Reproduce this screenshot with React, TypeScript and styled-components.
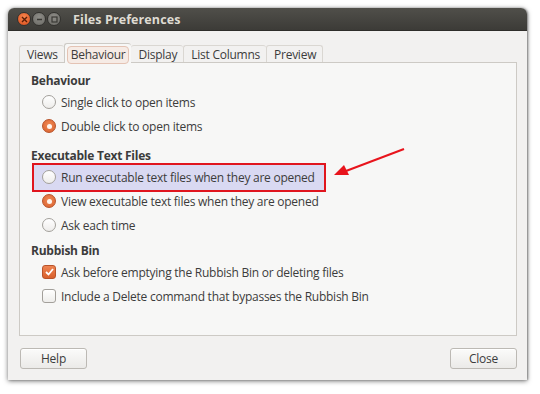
import React from 'react'
import styled, { createGlobalStyle, css } from 'styled-components'

const Global = createGlobalStyle`
  html, body {
    margin: 0;
    background: #ffffff;
  }
  body {
    font-family: "Open Sans", "Noto Sans", sans-serif;
    font-size: 12px;
    letter-spacing: -0.25px;
    color: #3c3c3c;
  }
`

const Page = styled.div`
  width: 540px;
  height: 394px;
  padding: 8px 0 0 8px;
  box-sizing: border-box;
`

const Window = styled.div`
  width: 519px;
  height: 372px;
  display: flex;
  flex-direction: column;
  border-radius: 6px 6px 0 0;
  overflow: hidden;
  box-shadow: 0 1px 5px rgba(0, 0, 0, 0.55), 1px 0 2px rgba(0, 0, 0, 0.3);
  background: #f2f1f0;
`

const TitleBar = styled.div`
  height: 23px;
  flex: none;
  display: flex;
  align-items: center;
  padding-left: 9px;
  gap: 1px;
  background: linear-gradient(#504f4a, #3c3b37);
  border-bottom: 1px solid #2e2d2a;
  box-sizing: border-box;
`

const WinButton = styled.span<{ $kind: 'close' | 'min' | 'max' }>`
  width: 14px;
  height: 14px;
  border-radius: 50%;
  display: inline-flex;
  align-items: center;
  justify-content: center;
  box-sizing: border-box;
  border: 1px solid #33322f;
  background: ${p => (p.$kind === 'close'
    ? 'radial-gradient(circle at 50% 35%, #f8874f, #d94d1b)'
    : 'radial-gradient(circle at 50% 35%, #8e8d88, #6b6a65)')};
  svg {
    display: block;
  }
`

const Title = styled.span`
  margin-left: 11px;
  font-weight: 700;
  font-size: 12.5px;
  color: #dfdbd2;
  letter-spacing: 0.1px;
`

const Body = styled.div`
  flex: 1;
  display: flex;
  flex-direction: column;
  padding: 12px 10px 11px 11px;
`

const Tabs = styled.div`
  display: flex;
  height: 19px;
  align-items: stretch;
`

const Tab = styled.div<{ $active?: boolean }>`
  padding: 0 6px 0 7px;
  display: flex;
  align-items: center;
  border: 1px solid #dad7d2;
  border-bottom: none;
  border-right: none;
  border-radius: 3px 3px 0 0;
  margin-top: 2px;
  &:last-child {
    border-right: 1px solid #dad7d2;
  }
  ${p => p.$active && css`
    margin-top: 0;
    padding: 2px 2px 0;
    background: #f7f7f6;
    border-color: #cdcac5;
    position: relative;
    z-index: 1;
    margin-bottom: -1px;
    & + div {
      border-left: none;
    }
    span {
      display: block;
      padding: 1px 3px;
      border: 1px solid #e4c3b4;
      border-radius: 4px;
      background: #f6ebe5;
      line-height: 14px;
    }
  `}
`

const Panel = styled.div`
  position: relative;
  height: 274px;
  box-sizing: border-box;
  border: 1px solid #cdcac5;
  background: #f7f7f6;
  padding: 9px 0 0 11px;
  display: flex;
  flex-direction: column;
`

const Section = styled.div<{ $gap: number }>`
  margin-top: ${p => p.$gap}px;
  display: flex;
  flex-direction: column;
`

const Heading = styled.div`
  height: 18px;
  line-height: 18px;
  font-weight: 700;
  color: #3c3c3c;
`

const Row = styled.div<{ $highlight?: boolean }>`
  position: relative;
  height: 24px;
  display: flex;
  align-items: center;
  gap: 5px;
  padding-left: 11px;
  ${p => p.$highlight && css`
    &::before {
      content: '';
      position: absolute;
      left: 1px;
      top: -2px;
      width: 290px;
      height: 25px;
      border: 2px solid #e0151e;
      background: #d9d9f2;
      z-index: 0;
    }
    & > * {
      position: relative;
      z-index: 1;
    }
  `}
`

const Radio = styled.span<{ $on?: boolean }>`
  width: 14px;
  height: 14px;
  border-radius: 50%;
  box-sizing: border-box;
  display: inline-flex;
  align-items: center;
  justify-content: center;
  flex: none;
  ${p => p.$on
    ? css`
      border: 1px solid #b8532a;
      background: radial-gradient(circle at 50% 40%, #f08a56, #d9602c);
      &::after {
        content: '';
        width: 5px;
        height: 5px;
        border-radius: 50%;
        background: #fff6ef;
      }
    `
    : css`
      border: 1px solid #a3a09b;
      background: linear-gradient(#ffffff, #eeedeb);
    `}
`

const Check = styled.span<{ $on?: boolean }>`
  width: 14px;
  height: 14px;
  border-radius: 3px;
  box-sizing: border-box;
  display: inline-flex;
  align-items: center;
  justify-content: center;
  flex: none;
  ${p => p.$on
    ? css`
      border: 1px solid #b8532a;
      background: linear-gradient(#ee8452, #d9602c);
    `
    : css`
      border: 1px solid #a3a09b;
      background: linear-gradient(#ffffff, #eeedeb);
    `}
`

const Label = styled.span`
  white-space: nowrap;
`

const Arrow = styled.svg`
  position: absolute;
  left: 300px;
  top: 82px;
  overflow: visible;
`

const Footer = styled.div`
  margin-top: 12px;
  display: flex;
  justify-content: space-between;
  padding-left: 1px;
`

const Button = styled.button`
  width: 67px;
  height: 21px;
  font-family: inherit;
  font-size: 12px;
  letter-spacing: inherit;
  color: #3c3c3c;
  border: 1px solid #bcb9b4;
  border-radius: 3px;
  background: linear-gradient(#fbfbfa, #ebeae8);
  box-shadow: inset 0 1px 0 #ffffff;
  padding: 0;
`

type Item = { kind: 'radio' | 'check'; on?: boolean; text: string; highlight?: boolean }

const sections: { title: string; gap: number; items: Item[] }[] = [
  {
    title: 'Behaviour',
    gap: 0,
    items: [
      { kind: 'radio', text: 'Single click to open items' },
      { kind: 'radio', on: true, text: 'Double click to open items' },
    ],
  },
  {
    title: 'Executable Text Files',
    gap: 9,
    items: [
      { kind: 'radio', text: 'Run executable text files when they are opened', highlight: true },
      { kind: 'radio', on: true, text: 'View executable text files when they are opened' },
      { kind: 'radio', text: 'Ask each time' },
    ],
  },
  {
    title: 'Rubbish Bin',
    gap: 5,
    items: [
      { kind: 'check', on: true, text: 'Ask before emptying the Rubbish Bin or deleting files' },
      { kind: 'check', text: 'Include a Delete command that bypasses the Rubbish Bin' },
    ],
  },
]

const tabs = ['Views', 'Behaviour', 'Display', 'List Columns', 'Preview']

export default function App() {
  return (
    <Page>
      <Global />
      <Window>
        <TitleBar>
          <WinButton $kind="close">
            <svg width="7" height="7" viewBox="0 0 7 7">
              <path d="M1 1 L6 6 M6 1 L1 6" stroke="#5a1e08" strokeWidth="1.4" />
            </svg>
          </WinButton>
          <WinButton $kind="min">
            <svg width="7" height="7" viewBox="0 0 7 7">
              <path d="M1 3.5 H6" stroke="#3a3935" strokeWidth="1.4" />
            </svg>
          </WinButton>
          <WinButton $kind="max">
            <svg width="7" height="7" viewBox="0 0 7 7">
              <rect x="1" y="1" width="5" height="5" fill="none" stroke="#3a3935" strokeWidth="1.2" />
            </svg>
          </WinButton>
          <Title>Files Preferences</Title>
        </TitleBar>
        <Body>
          <Tabs>
            {tabs.map(t => (
              <Tab key={t} $active={t === 'Behaviour'}>
                <span>{t}</span>
              </Tab>
            ))}
          </Tabs>
          <Panel>
            {sections.map(s => (
              <Section key={s.title} $gap={s.gap}>
                <Heading>{s.title}</Heading>
                {s.items.map(it => (
                  <Row key={it.text} $highlight={it.highlight}>
                    {it.kind === 'radio' ? (
                      <Radio $on={it.on} />
                    ) : (
                      <Check $on={it.on}>
                        {it.on && (
                          <svg width="9" height="8" viewBox="0 0 9 8">
                            <path d="M1 4 L3.5 6.5 L8 1" fill="none" stroke="#fff" strokeWidth="1.8" />
                          </svg>
                        )}
                      </Check>
                    )}
                    <Label>{it.text}</Label>
                  </Row>
                ))}
              </Section>
            ))}
            <Arrow width="80" height="30" viewBox="0 0 80 30">
              <path d="M84 4 L26 26" stroke="#e8141c" strokeWidth="2" fill="none" />
              <path d="M14 30 L24 20 L29 30 Z" fill="#e8141c" />
            </Arrow>
          </Panel>
          <Footer>
            <Button>Help</Button>
            <Button>Close</Button>
          </Footer>
        </Body>
      </Window>
    </Page>
  )
}
